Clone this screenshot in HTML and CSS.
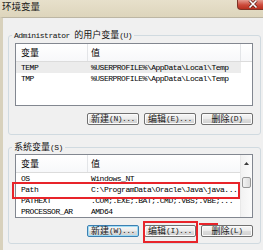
FILE: index.html
```html
<!DOCTYPE html>
<html>
<head>
<meta charset="utf-8">
<title>环境变量</title>
<link rel="stylesheet" href="styles.css">
</head>
<body>
<div class="titlebar">
  <span class="title zh">环境变量</span>
  <div class="close">
    <svg width="10" height="8" viewBox="0 0 10 8"><path d="M1.5 0.5 L8.5 7.5 M8.5 0.5 L1.5 7.5" stroke="#5a1a12" stroke-width="3"/><path d="M1.5 0.5 L8.5 7.5 M8.5 0.5 L1.5 7.5" stroke="#ffffff" stroke-width="1.6"/></svg>
  </div>
</div>
<div class="client">
  <div class="group g1">
    <div class="legend">Administrator <span class="zh">的用户变量</span>(U)</div>
    <div class="list l1">
      <div class="listmain">
        <div class="hdr"><div class="c1 zh">变量</div><div class="c2 zh">值</div><div class="fill"></div></div>
        <div class="row sel"><div class="c1">TEMP</div><div class="c2">%USERPROFILE%\AppData\Local\Temp</div></div>
        <div class="row"><div class="c1">TMP</div><div class="c2">%USERPROFILE%\AppData\Local\Temp</div></div>
      </div>
    </div>
    <div class="buttons">
      <div class="btn"><span class="zh">新建</span>(N)...</div>
      <div class="btn"><span class="zh">编辑</span>(E)...</div>
      <div class="btn"><span class="zh">删除</span>(D)</div>
    </div>
  </div>
  <div class="group g2">
    <div class="legend"><span class="zh">系统变量</span>(S)</div>
    <div class="list l2">
      <div class="listmain">
        <div class="hdr"><div class="c1 zh">变量</div><div class="c2 zh">值</div></div>
        <div class="row"><div class="c1">OS</div><div class="c2">Windows_NT</div></div>
        <div class="row"><div class="c1">Path</div><div class="c2">C:\ProgramData\Oracle\Java\java...</div></div>
        <div class="row"><div class="c1">PATHEXT</div><div class="c2">.COM;.EXE;.BAT;.CMD;.VBS;.VBE;...</div></div>
        <div class="row"><div class="c1">PROCESSOR_AR</div><div class="c2">AMD64</div></div>
      </div>
      <div class="scrollbar">
        <div class="sb-up"><svg width="5" height="3" viewBox="0 0 5 3"><path d="M0 3 L2.5 0 L5 3 Z" fill="#3c3c3c"/></svg></div>
        <div class="sb-gap"></div>
        <div class="sb-thumb"></div>
      </div>
    </div>
    <div class="buttons">
      <div class="btn default"><span class="zh">新建</span>(W)...</div>
      <div class="btn"><span class="zh">编辑</span>(I)...</div>
      <div class="btn"><span class="zh">删除</span>(L)</div>
    </div>
  </div>
</div>
<div class="mark mark-path"></div>
<div class="mark mark-edit"></div>
<div class="mark-line"></div>
</body>
</html>
```

FILE: styles.css
```css
html, body {
  margin: 0;
  padding: 0;
}
body {
  width: 263px;
  height: 250px;
  overflow: hidden;
  position: relative;
  background: #f0f0f0;
  font-family: "Liberation Mono", monospace;
  font-size: 8px;
  letter-spacing: -0.5px;
  color: #000;
}
.zh {
  font-family: "Noto Sans CJK SC", sans-serif;
  font-size: 9px;
  letter-spacing: 0;
}
.titlebar {
  height: 17px;
  display: flex;
  align-items: flex-start;
  background: linear-gradient(#e7e0cb, #ddd5bc);
}
.title {
  margin: 1px 0 0 2px;
  line-height: 11px;
  font-size: 9.5px;
  color: #1a1a1a;
}
.close {
  margin-left: auto;
  width: 26px;
  height: 10px;
  border-left: 1px solid #7e3327;
  border-bottom: 1px solid #7e3327;
  border-bottom-left-radius: 4px;
  background: linear-gradient(#e59b8f, #cc4a3b 55%, #b8301f);
  display: flex;
  justify-content: center;
  align-items: flex-start;
  padding-left: 4px;
  box-sizing: border-box;
}
.close svg {
  display: block;
}
.client {
  height: 233px;
  box-sizing: border-box;
  border-left: 3px solid #d8d1bc;
  border-top: 1px solid #bcb6a4;
  background: #f0f0f0;
  overflow: hidden;
}
.group {
  margin-left: 5px;
  width: 253px;
  box-sizing: border-box;
  border: 1px solid #d0dae0;
  border-radius: 3px;
  padding: 0 7px 0 6px;
  display: flex;
  flex-direction: column;
}
.g1 {
  margin-top: 17px;
  height: 100px;
}
.g2 {
  margin-top: 12px;
  height: 97px;
}
.legend {
  margin-top: -7px;
  margin-left: -3px;
  align-self: flex-start;
  height: 11px;
  line-height: 11px;
  padding: 0 2px;
  background: #f0f0f0;
  white-space: nowrap;
  color: #111;
}
.list {
  width: 238px;
  box-sizing: border-box;
  border: 1px solid #828790;
  background: #fff;
  display: flex;
  overflow: hidden;
}
.l1 {
  margin-top: 3px;
  height: 63px;
}
.l2 {
  margin-top: 2px;
  height: 64px;
}
.listmain {
  flex: 1;
  display: flex;
  flex-direction: column;
  min-width: 0;
}
.hdr {
  display: flex;
  height: 18px;
  box-sizing: border-box;
  border-bottom: 1px solid #dcdcdc;
  background: linear-gradient(#ffffff, #f7f8fa);
  line-height: 17px;
  flex: none;
}
.hdr .c1, .hdr .c2 {
  border-right: 1px solid #e3e5e8;
}
.fill {
  flex: 1;
}
.c1 {
  width: 72px;
  box-sizing: border-box;
  padding-left: 5px;
  white-space: nowrap;
  overflow: hidden;
  flex: none;
}
.c2 {
  width: 153px;
  box-sizing: border-box;
  padding-left: 3px;
  white-space: nowrap;
  overflow: hidden;
  flex: none;
}
.row {
  display: flex;
  height: 11px;
  line-height: 11px;
  flex: none;
  width: 225px;
}
.row.sel {
  background: #ececec;
}
.scrollbar {
  width: 11px;
  flex: none;
  display: flex;
  flex-direction: column;
  align-items: center;
  background: linear-gradient(90deg, #f2f2f2, #fbfbfb);
  border-left: 1px solid #e8e8e8;
}
.sb-up {
  height: 14px;
  width: 100%;
  display: flex;
  justify-content: center;
  align-items: center;
}
.sb-up svg {
  display: block;
  margin-top: 3px;
}
.sb-gap {
  height: 8px;
}
.sb-thumb {
  width: 9px;
  height: 11px;
  box-sizing: border-box;
  border: 1px solid #979797;
  border-radius: 2px;
  background: linear-gradient(90deg, #f3f3f3, #dcdcdc);
}
.buttons {
  margin-top: 7px;
  display: flex;
  justify-content: flex-end;
  gap: 5px;
  width: 238px;
}
.btn {
  width: 52px;
  height: 12px;
  box-sizing: border-box;
  border: 1px solid #707070;
  border-radius: 2px;
  background: linear-gradient(#f6f6f6, #ececec 45%, #dcdcdc 55%, #d0d0d0);
  box-shadow: inset 0 0 0 1px #fbfbfb;
  display: flex;
  justify-content: center;
  align-items: center;
  line-height: 10px;
  white-space: nowrap;
  color: #1a1a1a;
}
.btn.default {
  border-color: #3c7fb1;
  box-shadow: inset 0 0 0 1px #9fdcf6;
}
.mark {
  position: absolute;
  border: 2px solid #e8242a;
  box-sizing: border-box;
}
.mark-path {
  left: 12px;
  top: 182px;
  width: 228px;
  height: 17px;
}
.mark-edit {
  left: 143px;
  top: 221px;
  width: 55px;
  height: 22px;
}
.mark-line {
  position: absolute;
  left: 199px;
  top: 223px;
  width: 19px;
  height: 2px;
  background: #e8242a;
}
```
